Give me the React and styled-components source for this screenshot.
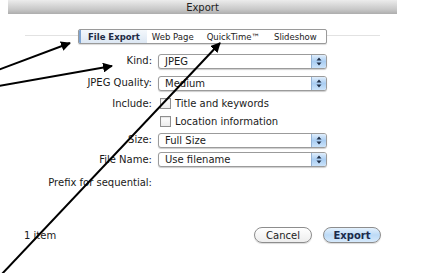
import React from "react";
import styled, { createGlobalStyle } from "styled-components";

const Global = createGlobalStyle`
  html, body {
    margin: 0;
    padding: 0;
    background: #fff;
  }
  body {
    font-family: "DejaVu Sans", "Liberation Sans", sans-serif;
    color: #1a1a1a;
  }
`;

const Page = styled.div`
  position: relative;
  width: 442px;
  height: 273px;
  overflow: hidden;
  background: #fff;
`;

const Window = styled.div`
  width: 389px;
  margin-left: 8px;
`;

const TitleBar = styled.div`
  height: 14px;
  background: linear-gradient(#ececec, #c6c6c6 70%, #adadad);
  display: flex;
  align-items: center;
  justify-content: center;
  font-size: 10px;
  color: #222;
`;

const TabRow = styled.div`
  margin: 15px 0 0 17px;
  width: 355px;
  display: flex;
  background: linear-gradient(
    transparent 6px,
    #e2e2e2 6px,
    #e2e2e2 7px,
    transparent 7px
  );
`;

const Tabs = styled.div`
  margin-left: 53px;
  width: 247px;
  height: 13px;
  display: flex;
  align-items: center;
  border: 1px solid #9a9a9a;
  border-radius: 2px;
  background: #fff;
  box-shadow: 0 1px 1px rgba(0, 0, 0, 0.15);
  overflow: hidden;
`;

const Tab = styled.div`
  height: 100%;
  display: flex;
  align-items: center;
  padding: 0 ${(p) => p.$pad}px;
  font-size: 8.5px;
  font-weight: ${(p) => (p.$active ? "bold" : "normal")};
  color: ${(p) => (p.$active ? "#1e2a44" : "#222")};
  background: ${(p) =>
    p.$active ? "linear-gradient(#f4f8fc, #dce7f3)" : "transparent"};
  border-left: ${(p) => (p.$active ? "2px solid #7ea4d2" : "none")};
  white-space: nowrap;
`;

const Form = styled.div`
  margin-top: 6px;
  display: grid;
  grid-template-columns: 144px 169px;
  column-gap: 6px;
  align-items: center;
`;

const Label = styled.div`
  grid-column: 1;
  text-align: right;
  font-size: 10px;
  height: ${(p) => p.$h}px;
  line-height: ${(p) => p.$h}px;
  white-space: nowrap;
`;

const Cell = styled.div`
  grid-column: 2;
  height: ${(p) => p.$h}px;
  display: flex;
  align-items: center;
`;

const Popup = styled.div`
  width: 100%;
  height: 15px;
  flex-shrink: 0;
  box-sizing: border-box;
  border: 1px solid #9b9b9b;
  border-radius: 3px;
  background: #fff;
  box-shadow: 0 1px 1px rgba(0, 0, 0, 0.2);
  display: flex;
  align-items: center;
  overflow: hidden;
`;

const PopupText = styled.div`
  flex: 1;
  padding-left: 6px;
  font-size: 10px;
`;

const Stepper = styled.div`
  width: 14px;
  height: 100%;
  border-left: 1px solid #94b2d4;
  background: linear-gradient(#e0eefc, #a9cdf2 50%, #cbe3fa);
  display: flex;
  align-items: center;
  justify-content: center;
`;

const Check = styled.label`
  display: flex;
  align-items: center;
  gap: 4px;
  font-size: 10px;
  padding-left: 2px;
`;

const Box = styled.span`
  width: 9px;
  height: 9px;
  border: 1px solid #8f8f8f;
  background: linear-gradient(#fff, #ececec);
  box-shadow: inset 0 1px 1px rgba(0, 0, 0, 0.1);
`;

const Footer = styled.div`
  margin-top: 29px;
  display: flex;
  align-items: center;
  padding-left: 16px;
`;

const Count = styled.div`
  font-size: 10px;
  flex: 1;
`;

const Buttons = styled.div`
  display: flex;
  gap: 11px;
  margin-right: 16px;
`;

const Button = styled.div`
  width: 58px;
  height: 16px;
  box-sizing: border-box;
  border: 1px solid #8d8d8d;
  border-radius: 9px;
  display: flex;
  align-items: center;
  justify-content: center;
  font-size: 10px;
  font-weight: ${(p) => (p.$primary ? "bold" : "normal")};
  color: ${(p) => (p.$primary ? "#1b2a4a" : "#222")};
  background: ${(p) =>
    p.$primary
      ? "linear-gradient(#e4f1fd, #bcdaf6 50%, #d6e9fb)"
      : "linear-gradient(#fff, #ededed)"};
  box-shadow: 0 1px 1px rgba(0, 0, 0, 0.15);
`;

const Arrows = styled.svg`
  position: absolute;
  left: 0;
  top: 0;
  pointer-events: none;
`;

function StepIcon() {
  return (
    <svg width="6" height="9" viewBox="0 0 6 9">
      <path d="M3 0.5 L5.5 3.5 H0.5 Z M3 8.5 L5.5 5.5 H0.5 Z" fill="#1f2f48" />
    </svg>
  );
}

function Select({ value }) {
  return (
    <Popup>
      <PopupText>{value}</PopupText>
      <Stepper>
        <StepIcon />
      </Stepper>
    </Popup>
  );
}

export default function App() {
  return (
    <Page>
      <Global />
      <Window>
        <TitleBar>Export</TitleBar>
        <TabRow>
          <Tabs>
            <Tab $active $pad={7}>File Export</Tab>
            <Tab $pad={5}>Web Page</Tab>
            <Tab $pad={8}>QuickTime™</Tab>
            <Tab $pad={6}>Slideshow</Tab>
          </Tabs>
        </TabRow>
        <Form>
          <Label $h={22}>Kind:</Label>
          <Cell $h={22}>
            <Select value="JPEG" />
          </Cell>
          <Label $h={22}>JPEG Quality:</Label>
          <Cell $h={22}>
            <Select value="Medium" />
          </Cell>
          <Label $h={19}>Include:</Label>
          <Cell $h={19}>
            <Check>
              <Box />
              Title and keywords
            </Check>
          </Cell>
          <Label $h={16} />
          <Cell $h={16}>
            <Check>
              <Box />
              Location information
            </Check>
          </Cell>
          <Label $h={22}>Size:</Label>
          <Cell $h={22}>
            <Select value="Full Size" />
          </Cell>
          <Label $h={17}>File Name:</Label>
          <Cell $h={17}>
            <Select value="Use filename" />
          </Cell>
          <Label $h={30}>Prefix for sequential:</Label>
          <Cell $h={30} />
        </Form>
        <Footer>
          <Count>1 item</Count>
          <Buttons>
            <Button>Cancel</Button>
            <Button $primary>Export</Button>
          </Buttons>
        </Footer>
      </Window>
      <Arrows width="442" height="273" viewBox="0 0 442 273">
        <defs>
          <marker
            id="head"
            viewBox="0 0 10 10"
            refX="9"
            refY="5"
            markerWidth="5"
            markerHeight="5"
            orient="auto"
          >
            <path d="M0 0 L10 5 L0 10 Z" fill="#000" />
          </marker>
        </defs>
        <line x1="-2" y1="70" x2="70" y2="43" stroke="#000" strokeWidth="2" markerEnd="url(#head)" />
        <line x1="-2" y1="86" x2="112" y2="66" stroke="#000" strokeWidth="2" markerEnd="url(#head)" />
        <line x1="1" y1="275" x2="220" y2="43" stroke="#000" strokeWidth="2" markerEnd="url(#head)" />
      </Arrows>
    </Page>
  );
}
